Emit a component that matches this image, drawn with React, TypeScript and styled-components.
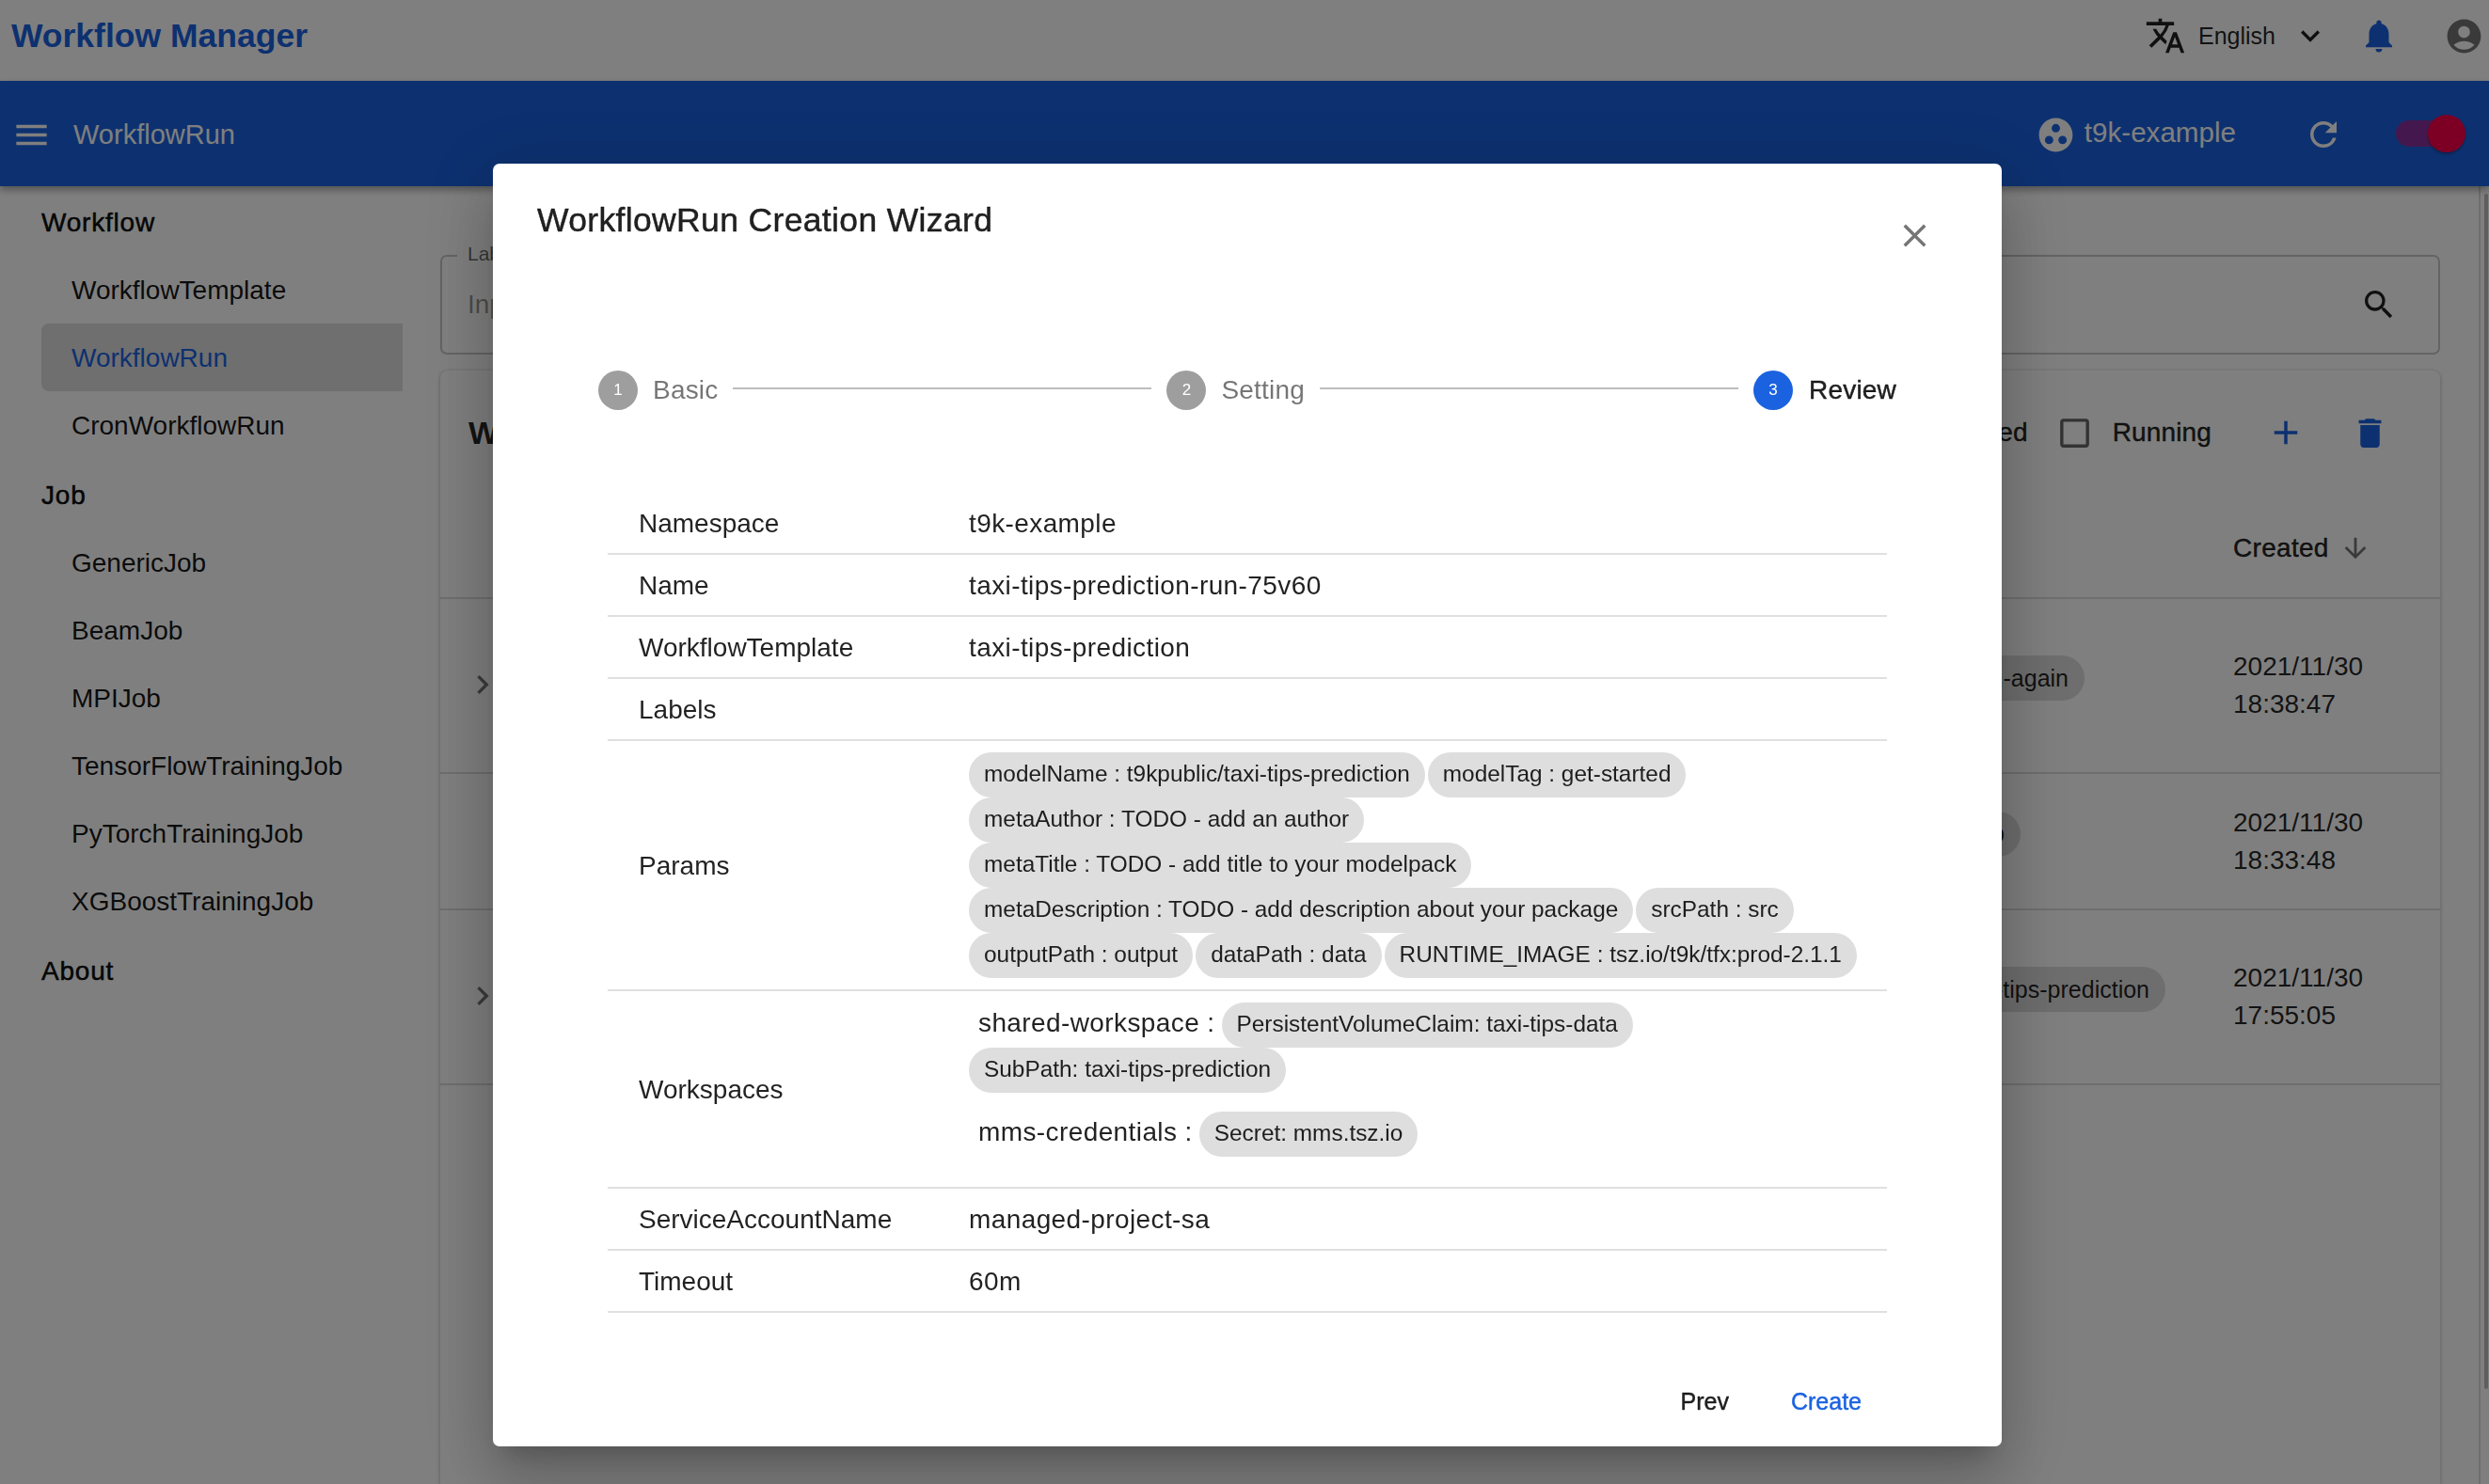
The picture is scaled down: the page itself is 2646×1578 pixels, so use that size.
import React from "react";
import styled, { createGlobalStyle, css } from "styled-components";
import {
  MdAccountCircle, MdAdd, MdArrowDownward, MdCheckBoxOutlineBlank, MdChevronRight, MdClose, MdDelete,
  MdExpandMore, MdGroupWork, MdMenu, MdNotifications, MdRefresh, MdSearch, MdTranslate,
} from "react-icons/md";

const PRIMARY = "#1a62e0";

const medium = css`
  -webkit-text-stroke: 0.45px currentColor;
`;

const Global = createGlobalStyle`
  html, body { margin: 0; padding: 0; height: 100%; overflow: hidden; background: #fff; }
  #root { height: 100%; }
  * { box-sizing: border-box; }
  body { font-family: "Liberation Sans", Arial, sans-serif; color: rgba(0,0,0,.87); }
`;

const Page = styled.div`
  display: flex;
  flex-direction: column;
  height: 1578px;
  overflow: hidden;
`;

const TopBar = styled.header`
  flex: none;
  height: 86px;
  display: flex;
  align-items: center;
  padding: 0 5px 10px 12px;
  background: #fff;
`;

const Brand = styled.div`
  font-size: 35.5px;
  font-weight: 700;
  color: ${PRIMARY};
  margin-right: auto;
`;

const TopText = styled.span`
  font-size: 25px;
  margin-left: 13px;
`;

const TopIcon = styled.span<{ $size: number; $gap: number; $color?: string }>`
  display: flex;
  flex: none;
  margin-left: ${(p) => p.$gap}px;
  font-size: ${(p) => p.$size}px;
  color: ${(p) => p.$color || "rgba(0,0,0,.87)"};
`;

const AppBar = styled.div`
  flex: none;
  position: relative;
  z-index: 1;
  height: 112px;
  display: flex;
  align-items: center;
  padding: 2px 39px 0 12px;
  background: ${PRIMARY};
  color: #fff;
  box-shadow: 0 4px 8px rgba(0, 0, 0, 0.35);
`;

const PageName = styled.div`
  font-size: 29px;
  margin-left: 23px;
  margin-right: auto;
`;

const Namespace = styled.div`
  font-size: 29.6px;
  margin-left: 9px;
  margin-top: -4px;
`;

const SwitchTrack = styled.div`
  position: relative;
  width: 60px;
  height: 28px;
  margin-left: 56px;
  margin-top: -2px;
  border-radius: 14px;
  background: rgba(245, 0, 87, 0.5);
`;

const SwitchThumb = styled.div`
  position: absolute;
  right: -14px;
  top: -6px;
  width: 40px;
  height: 40px;
  border-radius: 50%;
  background: #fa0048;
  box-shadow: 0 2px 3px rgba(0, 0, 0, 0.3);
`;

const Body = styled.div`
  flex: 1;
  min-height: 0;
  display: flex;
`;

const Sidebar = styled.nav`
  flex: none;
  width: 468px;
  padding: 0 40px 0 44px;
`;

const NavHead = styled.div`
  height: 72px;
  margin-top: 2px;
  padding-top: 2px;
  display: flex;
  align-items: center;
  font-size: 28px;
  letter-spacing: 0.8px;
  color: rgba(0, 0, 0, 0.95);
  -webkit-text-stroke: 0.55px currentColor;
`;

const NavItem = styled.div<{ $active?: boolean }>`
  height: 72px;
  display: flex;
  align-items: center;
  padding: 2px 0 0 32px;
  font-size: 28px;
  color: ${(p) => (p.$active ? PRIMARY : "rgba(0,0,0,.92)")};
  background: ${(p) => (p.$active ? "#dedede" : "transparent")};
  border-radius: ${(p) => (p.$active ? "8px 0 0 8px" : "0")};
`;

const Main = styled.main`
  flex: 1;
  min-width: 0;
  padding: 73px 41px 0 0;
  display: flex;
  flex-direction: column;
  gap: 17px;
`;

const SearchBox = styled.div`
  position: relative;
  flex: none;
  height: 106px;
  display: flex;
  align-items: center;
  justify-content: space-between;
  padding: 0 43px 0 27px;
  border: 2px solid #c8c8c8;
  border-radius: 7px;
`;

const SearchLabel = styled.span`
  position: absolute;
  left: 16px;
  top: -15px;
  padding: 0 11px;
  background: #fff;
  font-size: 21px;
  color: rgba(0, 0, 0, 0.6);
`;

const Placeholder = styled.span`
  font-size: 28px;
  color: rgba(0, 0, 0, 0.42);
`;

const Card = styled.section`
  flex: 1;
  border-radius: 8px 8px 0 0;
  background: #fff;
  box-shadow: 0 1px 4px rgba(0, 0, 0, 0.3);
`;

const Toolbar = styled.div`
  height: 132px;
  display: flex;
  align-items: center;
  padding: 0 54px 0 30px;
`;

const CardTitle = styled.div`
  font-size: 34px;
  font-weight: 700;
  margin-right: auto;
`;

const FilterText = styled.span`
  font-size: 28px;
  margin-left: 20px;
  letter-spacing: 0.15px;
  ${medium}
`;

const HeadRow = styled.div`
  height: 111px;
  display: flex;
  align-items: center;
  padding: 5px 0 0 1906px;
  border-bottom: 2px solid #dcdcdc;
`;

const HeadText = styled.span`
  font-size: 28px;
  letter-spacing: 0.3px;
  ${medium}
`;

const RunRow = styled.div<{ $height: number }>`
  height: ${(p) => p.$height}px;
  display: flex;
  align-items: center;
  padding-left: 25px;
  border-bottom: 2px solid #dcdcdc;
  font-size: 28px;
`;

const Chevron = styled.span`
  display: flex;
  width: 40px;
  padding-bottom: 3px;
  font-size: 40px;
  color: rgba(0, 0, 0, 0.54);
`;

const LabelCell = styled.div<{ $inset: number }>`
  flex: 1;
  display: flex;
  justify-content: flex-end;
  padding: 0 ${(p) => p.$inset}px 16px 0;
`;

const RunChip = styled.span`
  height: 48px;
  display: flex;
  align-items: center;
  padding: 0 17px;
  border-radius: 24px;
  background: #dcdcdc;
  font-size: 25px;
  white-space: nowrap;
`;

const DateCell = styled.div`
  flex: none;
  width: 220px;
  line-height: 40px;
  font-size: 28px;
`;

const ScrollTrack = styled.div`
  flex: none;
  width: 11px;
  padding: 8px 1px 0 4px;
  border-left: 2px solid #dcdcdc;
`;

const ScrollThumb = styled.div`
  height: 1271px;
  border-radius: 3px;
  background: #bdbdbd;
`;

const Backdrop = styled.div`
  position: fixed;
  inset: 0;
  z-index: 10;
  display: flex;
  align-items: flex-start;
  padding: 174px 0 0 524px;
  background: rgba(0, 0, 0, 0.5);
`;

const Dialog = styled.div`
  width: 1604px;
  height: 1364px;
  display: flex;
  flex-direction: column;
  border-radius: 7px;
  background: #fff;
  box-shadow: 0 18px 25px -12px rgba(0, 0, 0, 0.2), 0 40px 64px 5px rgba(0, 0, 0, 0.14), 0 15px 78px 14px rgba(0, 0, 0, 0.12);
`;

const DialogHeader = styled.div`
  flex: none;
  height: 101px;
  display: flex;
  justify-content: space-between;
  padding: 38px 72px 0 47px;
`;

const DialogTitle = styled.h2`
  margin: 0;
  font-size: 35.5px;
  font-weight: 400;
  line-height: 44px;
  letter-spacing: 0.35px;
  color: rgba(0, 0, 0, 0.87);
  ${medium}
`;

const CloseIcon = styled.span`
  display: flex;
  height: 41px;
  margin-top: 18px;
  font-size: 41px;
  color: #757575;
`;

const Stepper = styled.div`
  flex: none;
  margin: 119px 112px 0 112px;
  height: 42px;
  display: flex;
  align-items: center;
`;

const StepDot = styled.span<{ $active?: boolean }>`
  flex: none;
  width: 42px;
  height: 42px;
  display: flex;
  align-items: center;
  justify-content: center;
  border-radius: 50%;
  background: ${(p) => (p.$active ? PRIMARY : "#9e9e9e")};
  color: #fff;
  font-size: 17px;
`;

const StepLabel = styled.span<{ $active?: boolean }>`
  flex: none;
  margin-left: ${(p) => (p.$active ? 17 : 16)}px;
  font-size: 28px;
  letter-spacing: 0.2px;
  color: ${(p) => (p.$active ? "rgba(0,0,0,.87)" : "rgba(0,0,0,.54)")};
  ${(p) => p.$active && medium}
`;

const StepLine = styled.span`
  flex: 1;
  height: 2px;
  margin: -4px 16px 0;
  background: #bdbdbd;
`;

const Summary = styled.div`
  flex: none;
  margin: 88px 122px 0;
`;

const SummaryRow = styled.div`
  min-height: 66px;
  display: grid;
  grid-template-columns: 384px 1fr;
  align-items: center;
  border-bottom: 2px solid #e0e0e0;
  font-size: 28px;
  color: rgba(0, 0, 0, 0.87);
`;

const RowLabel = styled.div`
  padding: 1px 0 0 33px;
`;

const RowValue = styled.div`
  padding-top: 1px;
  letter-spacing: 0.4px;
`;

const ChipWrap = styled.div`
  display: flex;
  flex-wrap: wrap;
  width: 945px;
  padding: 12px 0;
  column-gap: 3px;
`;

const WorkspaceList = styled.div`
  width: 945px;
  padding: 12px 0;
`;

const WorkspaceGroup = styled.div`
  display: flex;
  flex-wrap: wrap;
  align-items: center;
  margin-bottom: 20px;
`;

const WorkspaceName = styled.span`
  margin: -4px 7px 0 10px;
  letter-spacing: 0.4px;
`;

const Chip = styled.span`
  height: 48px;
  display: flex;
  align-items: center;
  padding: 0 16px 2px;
  border-radius: 24px;
  background: #dedede;
  font-size: 24.4px;
  white-space: nowrap;
`;

const DialogFooter = styled.div`
  flex: 1;
  display: flex;
  justify-content: flex-end;
  align-items: center;
  gap: 66px;
  padding: 46px 149px 0 0;
`;

const FooterButton = styled.span<{ $primary?: boolean }>`
  font-size: 25px;
  color: ${(p) => (p.$primary ? PRIMARY : "rgba(0,0,0,.87)")};
  ${medium}
`;

const params = [
  "modelName : t9kpublic/taxi-tips-prediction",
  "modelTag : get-started",
  "metaAuthor : TODO - add an author",
  "metaTitle : TODO - add title to your modelpack",
  "metaDescription : TODO - add description about your package",
  "srcPath : src",
  "outputPath : output",
  "dataPath : data",
  "RUNTIME_IMAGE : tsz.io/t9k/tfx:prod-2.1.1",
];

const nav: { head: string; items: string[] }[] = [
  { head: "Workflow", items: ["WorkflowTemplate", "WorkflowRun", "CronWorkflowRun"] },
  { head: "Job", items: ["GenericJob", "BeamJob", "MPIJob", "TensorFlowTrainingJob", "PyTorchTrainingJob", "XGBoostTrainingJob"] },
  { head: "About", items: [] },
];

const runs = [
  { h: 186, chevron: true, chip: "taxi-tips-prediction-run-again", inset: 158, date: "2021/11/30", time: "18:38:47" },
  { h: 145, chevron: false, chip: "taxi-tips-prediction-setup", inset: 226, date: "2021/11/30", time: "18:33:48" },
  { h: 186, chevron: true, chip: "taxi-tips-prediction", inset: 72, date: "2021/11/30", time: "17:55:05" },
];

const simpleRows = [
  ["Namespace", "t9k-example"],
  ["Name", "taxi-tips-prediction-run-75v60"],
  ["WorkflowTemplate", "taxi-tips-prediction"],
  ["Labels", ""],
];

export default function App() {
  return (
    <Page>
      <Global />
      <TopBar>
        <Brand>Workflow Manager</Brand>
        <TopIcon $size={44} $gap={0}><MdTranslate /></TopIcon>
        <TopText>English</TopText>
        <TopIcon $size={40} $gap={17}><MdExpandMore /></TopIcon>
        <TopIcon $size={42} $gap={32} $color={PRIMARY}><MdNotifications /></TopIcon>
        <TopIcon $size={43} $gap={48} $color="rgba(0,0,0,.54)"><MdAccountCircle /></TopIcon>
      </TopBar>
      <AppBar>
        <TopIcon $size={43} $gap={0} $color="#fff"><MdMenu /></TopIcon>
        <PageName>WorkflowRun</PageName>
        <TopIcon $size={43} $gap={0} $color="#fff"><MdGroupWork /></TopIcon>
        <Namespace>t9k-example</Namespace>
        <TopIcon $size={42} $gap={72} $color="#fff"><MdRefresh /></TopIcon>
        <SwitchTrack><SwitchThumb /></SwitchTrack>
      </AppBar>
      <Body>
        <Sidebar>
          {nav.map((group) => (
            <React.Fragment key={group.head}>
              <NavHead>{group.head}</NavHead>
              {group.items.map((item) => (
                <NavItem key={item} $active={item === "WorkflowRun"}>{item}</NavItem>
              ))}
            </React.Fragment>
          ))}
        </Sidebar>
        <Main>
          <SearchBox>
            <SearchLabel>Labels</SearchLabel>
            <Placeholder>Input labels</Placeholder>
            <TopIcon $size={40} $gap={0}><MdSearch /></TopIcon>
          </SearchBox>
          <Card>
            <Toolbar>
              <CardTitle>WorkflowRuns</CardTitle>
              <FilterText>Failed</FilterText>
              <TopIcon $size={41} $gap={29} $color="rgba(0,0,0,.6)"><MdCheckBoxOutlineBlank /></TopIcon>
              <FilterText>Running</FilterText>
              <TopIcon $size={42} $gap={58} $color={PRIMARY}><MdAdd /></TopIcon>
              <TopIcon $size={41} $gap={48} $color={PRIMARY}><MdDelete /></TopIcon>
            </Toolbar>
            <HeadRow>
              <HeadText>Created</HeadText>
              <TopIcon $size={34} $gap={11} $color="rgba(0,0,0,.54)"><MdArrowDownward /></TopIcon>
            </HeadRow>
            {runs.map((run) => (
              <RunRow key={run.time} $height={run.h}>
                <Chevron>{run.chevron && <MdChevronRight />}</Chevron>
                <LabelCell $inset={run.inset}><RunChip>{run.chip}</RunChip></LabelCell>
                <DateCell>{run.date}<br />{run.time}</DateCell>
              </RunRow>
            ))}
          </Card>
        </Main>
        <ScrollTrack><ScrollThumb /></ScrollTrack>
      </Body>
      <Backdrop>
        <Dialog>
          <DialogHeader>
            <DialogTitle>WorkflowRun Creation Wizard</DialogTitle>
            <CloseIcon><MdClose /></CloseIcon>
          </DialogHeader>
          <Stepper>
            <StepDot>1</StepDot>
            <StepLabel>Basic</StepLabel>
            <StepLine />
            <StepDot>2</StepDot>
            <StepLabel>Setting</StepLabel>
            <StepLine />
            <StepDot $active>3</StepDot>
            <StepLabel $active>Review</StepLabel>
          </Stepper>
          <Summary>
            {simpleRows.map(([label, value]) => (
              <SummaryRow key={label}>
                <RowLabel>{label}</RowLabel>
                <RowValue>{value}</RowValue>
              </SummaryRow>
            ))}
            <SummaryRow>
              <RowLabel>Params</RowLabel>
              <ChipWrap>{params.map((p) => <Chip key={p}>{p}</Chip>)}</ChipWrap>
            </SummaryRow>
            <SummaryRow>
              <RowLabel>Workspaces</RowLabel>
              <WorkspaceList>
                <WorkspaceGroup>
                  <WorkspaceName>shared-workspace :</WorkspaceName>
                  <Chip>PersistentVolumeClaim: taxi-tips-data</Chip>
                  <Chip>SubPath: taxi-tips-prediction</Chip>
                </WorkspaceGroup>
                <WorkspaceGroup>
                  <WorkspaceName>mms-credentials :</WorkspaceName>
                  <Chip>Secret: mms.tsz.io</Chip>
                </WorkspaceGroup>
              </WorkspaceList>
            </SummaryRow>
            <SummaryRow>
              <RowLabel>ServiceAccountName</RowLabel>
              <RowValue>managed-project-sa</RowValue>
            </SummaryRow>
            <SummaryRow>
              <RowLabel>Timeout</RowLabel>
              <RowValue>60m</RowValue>
            </SummaryRow>
          </Summary>
          <DialogFooter>
            <FooterButton>Prev</FooterButton>
            <FooterButton $primary>Create</FooterButton>
          </DialogFooter>
        </Dialog>
      </Backdrop>
    </Page>
  );
}
